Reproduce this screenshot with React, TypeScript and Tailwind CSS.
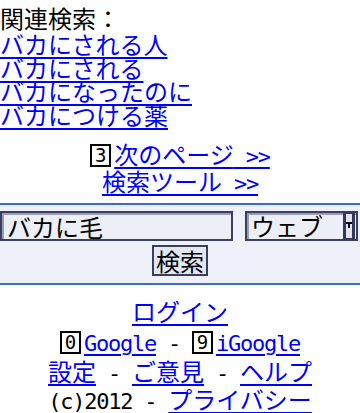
import React from "react";

const latin = "font-['DejaVu_Sans_Mono',monospace] text-[22px] tracking-[-1.25px] leading-none";
const link = "text-[#0000ff] underline decoration-2 underline-offset-[3px]";

const RELATED = ["バカにされる人", "バカにされる", "バカになったのに", "バカにつける薬"];

// accesskey digit box
function Key({ n }: { n: string }) {
  return (
    <span className="mr-[3px] inline-block h-[23px] w-[21px] border-2 border-black text-center align-[2px] font-['DejaVu_Sans_Mono',monospace] text-[19px] leading-[19px] text-black">
      {n}
    </span>
  );
}

export default function App() {
  return (
    <div className="h-[413px] w-[360px] overflow-hidden bg-white font-['Noto_Sans_CJK_JP',sans-serif] text-[24px] text-black">
      {/* related searches */}
      <div className="pb-[2px] pt-[6px] leading-[24px]">関連検索：</div>
      <div className="leading-[23.5px]">
        {RELATED.map((r) => (
          <div key={r}>
            <a href="#" className={link}>
              {r}
            </a>
          </div>
        ))}
      </div>

      {/* paging */}
      <div className="mt-[15px] text-center leading-[25px]">
        <div>
          <Key n="3" />
          <a href="#" className={link}>
            次のページ<span className={latin}> &gt;&gt;</span>
          </a>
        </div>
        <div>
          <a href="#" className={link}>
            検索ツール<span className={latin}> &gt;&gt;</span>
          </a>
        </div>
      </div>

      {/* search form */}
      <div className="mt-[8px] border-y-2 border-[#3a6bd6] bg-[#eef1f9] pb-[7px] pt-[6px]">
        <div className="flex items-center gap-[12px]">
          <input
            readOnly
            value="バカに毛"
            className="h-[30px] w-[233px] border-2 border-[#3a3f5c] bg-[#eceff6] pl-[5px] text-[24px] leading-[26px] text-black shadow-[inset_2px_2px_0_#9a9eb4] outline-none"
          />
          <div className="flex h-[30px] w-[113px] items-stretch border-2 border-[#3a3f5c] bg-[#eceff6] shadow-[inset_2px_2px_0_#9a9eb4]">
            <span className="flex-1 pl-[4px] text-[24px] leading-[26px]">ウェブ</span>
            <span className="mr-[1px] flex w-[12px] flex-col items-center border-x-[3px] border-y border-[#33375a] bg-[#e2e3ec] pt-[8px]">
              <span className="h-[2px] w-[6px] bg-black" />
              <span className="h-[4px] w-[2px] bg-black" />
            </span>
          </div>
        </div>
        <div className="mt-[4px] flex justify-center">
          <button
            type="button"
            className="h-[31px] w-[56px] border-2 border-[#3a3f5c] bg-[#e4e7f1] text-[24px] leading-[26px] text-black"
          >
            検索
          </button>
        </div>
      </div>

      {/* footer */}
      <div className="mt-[11px] text-center leading-[30px]">
        <div>
          <a href="#" className={link}>
            ログイン
          </a>
        </div>
        <div>
          <Key n="0" />
          <a href="#" className={link}>
            <span className={latin}>Google</span>
          </a>
          <span className={latin}> - </span>
          <Key n="9" />
          <a href="#" className={link}>
            <span className={latin}>iGoogle</span>
          </a>
        </div>
        <div>
          <a href="#" className={link}>
            設定
          </a>
          <span className={latin}> - </span>
          <a href="#" className={link}>
            ご意見
          </a>
          <span className={latin}> - </span>
          <a href="#" className={link}>
            ヘルプ
          </a>
        </div>
        <div className="-mt-[2px]">
          <span className={latin}>(c)2012 - </span>
          <a href="#" className={link}>
            プライバシー
          </a>
        </div>
      </div>
    </div>
  );
}
